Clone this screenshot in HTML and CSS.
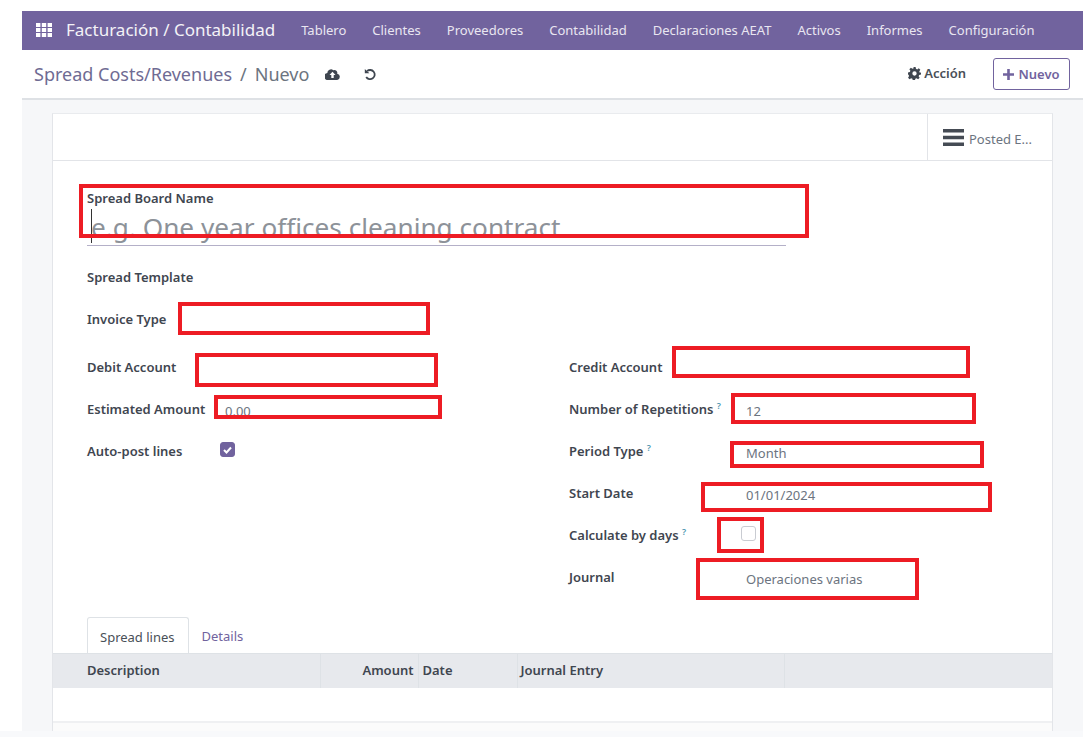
FILE: index.html
```html
<!DOCTYPE html>
<html lang="en">

<head>
    <meta charset="UTF-8">
    <meta name="viewport" content="width=device-width, initial-scale=1.0">
    <title>Spread Costs/Revenues</title>
    <link rel="stylesheet" href="styles.css">
</head>

<body>
    <div class="app">
        <!-- Top navigation -->
        <nav class="navbar">
            <svg class="apps-icon" width="16" height="14" viewBox="0 0 16 14">
                <path fill="#fff" d="M0 0h4.400v4H0zM5.800 0h4.400v4H5.800zM11.600 0H16v4h-4.400zM0 5h4.400v4H0zM5.800 5h4.400v4H5.800zM11.600 5H16v4h-4.400zM0 10h4.400v4H0zM5.800 10h4.400v4H5.800zM11.600 10H16v4h-4.400z"/>
            </svg>
            <span class="brand">Facturación / Contabilidad</span>
            <a class="nav-item">Tablero</a>
            <a class="nav-item">Clientes</a>
            <a class="nav-item">Proveedores</a>
            <a class="nav-item">Contabilidad</a>
            <a class="nav-item">Declaraciones AEAT</a>
            <a class="nav-item">Activos</a>
            <a class="nav-item">Informes</a>
            <a class="nav-item">Configuración</a>
        </nav>

        <!-- Control panel -->
        <div class="control-panel">
            <div class="breadcrumb">
                <span class="crumb-link">Spread Costs/Revenues</span>
                <span class="crumb-sep">/</span>
                <span class="crumb-current">Nuevo</span>
            </div>
            <svg class="save-icon" width="15" height="11" viewBox="0 0 15 11">
                <path fill="#3f4650" fill-rule="evenodd" d="M12.200 4.700A2.900 2.900 0 0 0 8.300 1.200 3.700 3.700 0 0 0 2.300 4 3.300 3.300 0 0 0 3.400 11h8.800a3.200 3.200 0 0 0 0-6.300zM7.500 2.800l3 3.100H8.700v3H6.300v-3H4.500z"/>
            </svg>
            <svg class="undo-icon" width="13" height="13" viewBox="0 0 13 13">
                <path fill="none" stroke="#3f4650" stroke-width="1.800" d="M3 3.200A4.600 4.600 0 1 1 2.200 9"/>
                <path fill="#3f4650" d="M.8.900l4.600 4.300H.8z"/>
            </svg>
            <div class="panel-actions">
                <span class="action">
                    <svg width="13" height="13" viewBox="0 0 24 24">
                        <path fill="#3f4650" fill-rule="evenodd" d="M10 0h4l.7 3.400 2.300 1 2.900-1.900 2.800 2.800-1.900 2.900 1 2.300L24 10v4l-3.400.7-1 2.300 1.900 2.900-2.800 2.800-2.900-1.900-2.300 1-.7 3.200h-4l-.7-3.400-2.300-1-2.900 1.900-2.800-2.800 1.900-2.900-1-2.300L0 14v-4l3.400-.7 1-2.300-1.900-2.900 2.800-2.800 2.900 1.900 2.300-1zM12 8a4 4 0 1 0 0 8 4 4 0 0 0 0-8z"/>
                    </svg>
                    Acción
                </span>
                <button type="button" class="new-btn">
                    <svg width="11" height="11" viewBox="0 0 11 11">
                        <path fill="#71639e" d="M4.200 0h2.600v4.200H11v2.600H6.800V11H4.200V6.800H0V4.200h4.200z"/>
                    </svg>
                    Nuevo
                </button>
            </div>
        </div>

        <!-- Form -->
        <div class="content">
            <div class="sheet">
                <div class="status-row">
                    <div class="stat-button">
                        <svg width="21" height="17" viewBox="0 0 21 17">
                            <path fill="#454b54" d="M0 0h21v3.400H0zM0 6.800h21v3.400H0zM0 13.600h21V17H0z"/>
                        </svg>
                        <span class="stat-text">Posted E...</span>
                    </div>
                </div>

                <div class="form-body">
                    <div class="title-field">
                        <label class="field-label">Spread Board Name</label>
                        <div class="title-input">
                            <span class="caret"></span>
                            <span class="placeholder">e.g. One year offices cleaning contract</span>
                        </div>
                    </div>

                    <div class="single-rows">
                        <div class="field-label">Spread Template</div>
                        <div class="field-label">Invoice Type</div>
                    </div>

                    <div class="columns">
                        <div class="col-left">
                            <div class="row"><span class="field-label">Debit Account</span></div>
                            <div class="row">
                                <span class="field-label">Estimated Amount</span>
                                <span class="value">0.00</span>
                            </div>
                            <div class="row">
                                <span class="field-label">Auto-post lines</span>
                                <span class="check check-on">
                                    <svg width="9" height="8" viewBox="0 0 9 8">
                                        <path fill="none" stroke="#fff" stroke-width="2" d="M1 4l2.500 2.500L8 1.500"/>
                                    </svg>
                                </span>
                            </div>
                        </div>
                        <div class="col-right">
                            <div class="row"><span class="field-label">Credit Account</span></div>
                            <div class="row">
                                <span class="field-label">Number of Repetitions <sup class="help">?</sup></span>
                                <span class="value">12</span>
                            </div>
                            <div class="row">
                                <span class="field-label">Period Type <sup class="help">?</sup></span>
                                <span class="value">Month</span>
                            </div>
                            <div class="row">
                                <span class="field-label">Start Date</span>
                                <span class="value">01/01/2024</span>
                            </div>
                            <div class="row">
                                <span class="field-label">Calculate by days <sup class="help">?</sup></span>
                                <span class="check"></span>
                            </div>
                            <div class="row">
                                <span class="field-label">Journal</span>
                                <span class="value">Operaciones varias</span>
                            </div>
                        </div>
                    </div>

                    <div class="tabs">
                        <a class="tab tab-active">Spread lines</a>
                        <a class="tab">Details</a>
                    </div>
                </div>

                <table class="lines">
                    <thead>
                        <tr>
                            <th class="col-desc">Description</th>
                            <th class="col-amount">Amount</th>
                            <th class="col-date">Date</th>
                            <th class="col-entry">Journal Entry</th>
                            <th></th>
                        </tr>
                    </thead>
                    <tbody>
                        <tr>
                            <td colspan="5"></td>
                        </tr>
                    </tbody>
                </table>
                <div class="sheet-foot"></div>
            </div>
        </div>
    </div>
    <div class="bottom-strip"></div>

    <!-- Red markers drawn over the screenshot -->
    <span class="mark mark-name"></span>
    <span class="mark mark-invoice"></span>
    <span class="mark mark-debit"></span>
    <span class="mark mark-amount"></span>
    <span class="mark mark-credit"></span>
    <span class="mark mark-reps"></span>
    <span class="mark mark-period"></span>
    <span class="mark mark-start"></span>
    <span class="mark mark-days"></span>
    <span class="mark mark-journal"></span>
</body>

</html>
```

FILE: styles.css
```css
html,
body {
    margin: 0;
    padding: 0;
    height: 100%;
    overflow: hidden;
}

body {
    font-family: "Noto Sans", Arial, sans-serif;
    font-size: 13px;
    color: #4c4c4c;
    background-color: #fff;
    position: relative;
}

.app {
    margin: 11px 0 0 22px;
    height: 720px;
    display: flex;
    flex-direction: column;
}

.bottom-strip {
    height: 6px;
    background-color: #f8f9fb;
}

/* navbar */
.navbar {
    height: 39px;
    flex: none;
    background-color: #71639e;
    color: #fff;
    display: flex;
    align-items: center;
    padding: 0 0 2px 14px;
    box-sizing: border-box;
}

.apps-icon {
    flex: none;
    margin-right: 14px;
}

.brand {
    font-size: 17px;
    margin-right: 13px;
    white-space: nowrap;
    opacity: 0.92;
}

.nav-item {
    padding: 0 13px;
    white-space: nowrap;
    color: #e9e6f1;
}

/* control panel */
.control-panel {
    height: 50px;
    flex: none;
    background: #fff;
    border-bottom: 2px solid #dee1e5;
    box-sizing: border-box;
    display: flex;
    align-items: center;
    padding: 0 13px 0 12px;
}

.breadcrumb {
    font-size: 18px;
    display: flex;
    gap: 8px;
    white-space: nowrap;
}

.crumb-link {
    color: #6f6b93;
}

.crumb-sep,
.crumb-current {
    color: #6c7480;
}

.save-icon {
    margin-left: 16px;
}

.undo-icon {
    margin-left: 24px;
}

.panel-actions {
    margin-left: auto;
    display: flex;
    align-items: center;
    gap: 27px;
}

.action {
    font-weight: 600;
    color: #495057;
    display: flex;
    align-items: center;
    gap: 3px;
    margin-top: -2px;
}

.new-btn {
    font: 600 13px "Noto Sans", Arial, sans-serif;
    color: #71639e;
    background: #fff;
    border: 1px solid #71639e;
    border-radius: 3px;
    height: 32px;
    width: 77px;
    padding: 0;
    display: flex;
    align-items: center;
    justify-content: center;
    gap: 4px;
}

/* form sheet */
.content {
    flex: 1;
    background-color: #f6f7f9;
    padding: 13px 30px 0 30px;
    min-height: 0;
}

.sheet {
    height: 100%;
    background: #fff;
    border-left: 1px solid #e3e5e9;
    border-right: 1px solid #e3e5e9;
    border-top: 1px solid #e9ebee;
    box-sizing: border-box;
    display: flex;
    flex-direction: column;
}

.status-row {
    height: 46px;
    flex: none;
    border-bottom: 1px solid #e2e4e8;
    display: flex;
    justify-content: flex-end;
}

.stat-button {
    width: 125px;
    box-sizing: border-box;
    border-left: 1px solid #e2e4e8;
    display: flex;
    align-items: center;
    gap: 5px;
    padding-left: 15px;
    color: #6c7480;
}

.stat-text {
    margin-top: 3px;
}

.form-body {
    padding: 28px 0 0 34px;
    flex: none;
}

.field-label {
    font-weight: 600;
    color: #3f4650;
    white-space: nowrap;
}

.title-field {
    width: 699px;
    height: 57px;
    border-bottom: 1px solid #b4b0c8;
    box-sizing: border-box;
}

.title-field .field-label {
    display: block;
    line-height: 18px;
}

.title-input {
    position: relative;
    font-size: 26.2px;
    line-height: 36px;
    margin-top: 2px;
    white-space: nowrap;
}

.caret {
    position: absolute;
    left: 4px;
    top: 0;
    width: 1px;
    height: 34px;
    background: #333;
}

.placeholder {
    color: #8d9299;
    padding-left: 4px;
}

.single-rows {
    display: grid;
    grid-auto-rows: 42px;
    align-items: center;
    margin-top: 10px;
}

.columns {
    display: grid;
    grid-template-columns: 482px 1fr;
    margin-top: 6px;
}

.row {
    height: 42px;
    display: flex;
    align-items: center;
}

.col-left .field-label {
    width: 138px;
    flex: none;
}

.col-right .field-label {
    width: 177px;
    flex: none;
}

.value {
    color: #6c7480;
    margin-top: 4px;
}

.help {
    font-size: 9px;
    color: #4d96b0;
    line-height: 0;
}

.check {
    width: 13px;
    height: 13px;
    border: 1px solid #c9ccd2;
    border-radius: 3px;
    background: #fff;
    margin: -3px 0 0 -5px;
    display: flex;
    align-items: center;
    justify-content: center;
}

.check-on {
    background: #71639e;
    border-color: #71639e;
}

.tabs {
    display: flex;
    height: 36px;
    margin-top: 19px;
}

.tab {
    display: flex;
    align-items: center;
    padding: 2px 12px 0;
    color: #71639e;
}

.tab-active {
    color: #495057;
    border: 1px solid #dee2e6;
    border-bottom: none;
    border-radius: 3px 3px 0 0;
    padding-right: 13px;
    margin-right: 1px;
}

/* lines table */
.lines {
    width: 100%;
    border-collapse: collapse;
    table-layout: fixed;
    flex: none;
}

.lines th {
    height: 34px;
    box-sizing: border-box;
    padding: 0 0 2px 4px;
    background: #e7e9ed;
    border-top: 1px solid #dee2e6;
    border-right: 1px solid #dee2e6;
    text-align: left;
    font-weight: 600;
    color: #3f4650;
}

.lines th:last-child {
    border-right: none;
}

.lines .col-desc {
    width: 267px;
    padding-left: 34px;
}

.lines .col-amount {
    width: 98px;
    text-align: right;
    padding: 0 4px 2px 0;
}

.lines .col-date {
    width: 99px;
}

.lines .col-entry {
    width: 267px;
    padding-left: 3px;
}

.lines td {
    height: 34px;
    padding: 0;
    border-bottom: 2px solid #eff0f2;
    box-sizing: border-box;
}

.sheet-foot {
    flex: 1;
    background-color: #fbfbfb;
}

/* red markers, placed over the form */
.mark {
    position: absolute;
    border: 4px solid #ed1c24;
    box-sizing: border-box;
}

.mark-name {
    left: 79px;
    top: 184px;
    width: 730px;
    height: 54px;
}

.mark-invoice {
    left: 178px;
    top: 302px;
    width: 252px;
    height: 33px;
}

.mark-debit {
    left: 195px;
    top: 353px;
    width: 243px;
    height: 34px;
}

.mark-amount {
    left: 214px;
    top: 395px;
    width: 228px;
    height: 24px;
}

.mark-credit {
    left: 672px;
    top: 346px;
    width: 298px;
    height: 32px;
}

.mark-reps {
    left: 731px;
    top: 393px;
    width: 245px;
    height: 31px;
}

.mark-period {
    left: 730px;
    top: 441px;
    width: 254px;
    height: 27px;
}

.mark-start {
    left: 701px;
    top: 482px;
    width: 291px;
    height: 30px;
}

.mark-days {
    left: 717px;
    top: 517px;
    width: 47px;
    height: 36px;
}

.mark-journal {
    left: 696px;
    top: 558px;
    width: 223px;
    height: 42px;
}
```
